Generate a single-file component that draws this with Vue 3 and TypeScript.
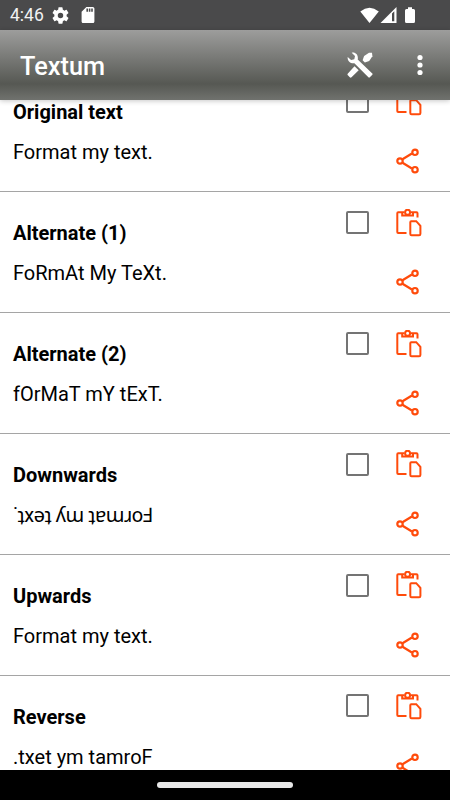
<script setup lang="ts">
interface Style {
  name: string
  text: string
  flipped?: boolean
}

const styles: Style[] = [
  { name: 'Original text', text: 'Format my text.' },
  { name: 'Alternate (1)', text: 'FoRmAt My TeXt.' },
  { name: 'Alternate (2)', text: 'fOrMaT mY tExT.' },
  { name: 'Downwards', text: '˙ʇxǝʇ ʎɯ ʇɐɯɹoℲ', flipped: true },
  { name: 'Upwards', text: 'Format my text.' },
  { name: 'Reverse', text: '.txet ym tamroF' },
]
</script>

<template>
  <div class="screen">
    <div class="status">
      <span class="clock">4:46</span>
      <svg class="gear" viewBox="2 2 20 20"><path d="M19.14 12.94c.04-.3.06-.61.06-.94 0-.32-.02-.64-.07-.94l2.03-1.58a.49.49 0 0 0 .12-.61l-1.92-3.32a.49.49 0 0 0-.59-.22l-2.39.96c-.5-.38-1.03-.7-1.62-.94l-.36-2.54a.48.48 0 0 0-.48-.41h-3.84c-.24 0-.43.17-.47.41l-.36 2.54c-.59.24-1.13.57-1.62.94l-2.39-.96a.48.48 0 0 0-.59.22L2.74 8.87c-.12.21-.08.47.12.61l2.03 1.58c-.05.3-.09.63-.09.94s.02.64.07.94l-2.03 1.58a.49.49 0 0 0-.12.61l1.92 3.32c.12.22.37.29.59.22l2.39-.96c.5.38 1.03.7 1.62.94l.36 2.54c.05.24.24.41.48.41h3.84c.24 0 .44-.17.47-.41l.36-2.54c.59-.24 1.13-.56 1.62-.94l2.39.96c.22.08.47 0 .59-.22l1.92-3.32a.49.49 0 0 0-.12-.61zM12 15.200A3.200 3.200 0 1 1 12 8.800a3.200 3.200 0 0 1 0 6.400z" /></svg>
      <svg class="sd" viewBox="4 2 16 20"><path d="M18 2h-8L4 8v12c0 1.100.9 2 2 2h12c1.100 0 2-.9 2-2V4c0-1.100-.9-2-2-2zm-6 6h-2V4h2zm3 0h-2V4h2zm3 0h-2V4h2z" /></svg>
      <svg class="signals" viewBox="0 0 56 18">
        <path d="M.3 4.500Q9.500-2.800 18.800 4.500L9.500 16z" />
        <path fill-rule="evenodd" d="M20.500 16L36.500 0V16zM32 6.500V14.200H34.300V4.200z" />
        <path d="M46.500 2H48V.3H52V2H53.500Q55 2 55 3.500V14.500Q55 16 53.500 16H46.500Q45 16 45 14.500V3.500Q45 2 46.500 2z" />
      </svg>
    </div>

    <header class="bar">
      <h1>Textum</h1>
      <svg class="tools" viewBox="0 0 26 26">
        <path d="M4.700.7C8.500-.3 11.700 3.200 10.700 7.500L25.300 21.400a1 1 0 0 1 0 1.400L22.800 25.300a1 1 0 0 1-1.400 0L7.400 11.200C3.700 12 .1 8.900.7 4.900L4.100 8 7.300 7.200 8 4z" />
        <path d="M15.600 8.300L17.100 3.900 22 .7 25 .8 25.400 4.300 22.200 9 17.800 10.500z" />
        <path d="M7.500 14.300L11.700 18.200 4.500 25.200a1.200 1.200 0 0 1-1.700 0L.9 23.300a1.200 1.200 0 0 1 0-1.700z" />
      </svg>
      <svg class="more" viewBox="0 0 6 20"><circle cx="3" cy="2.500" r="2.600" /><circle cx="3" cy="10" r="2.600" /><circle cx="3" cy="17.500" r="2.600" /></svg>
    </header>

    <main class="list">
      <section v-for="item in styles" :key="item.name" class="row">
        <div class="copy">
          <h2>{{ item.name }}</h2>
          <p :class="{ flipped: item.flipped }">{{ item.text }}</p>
        </div>
        <span class="check" role="checkbox" aria-checked="false"></span>
        <div class="actions">
          <svg class="paste" viewBox="0 0 26 28">
            <path d="M10.500 24H2.200Q1.300 24 1.300 23.100V4.200Q1.300 3.300 2.200 3.300H8.500M15 3.300H20.500Q21.500 3.300 21.500 4.300V8.500" />
            <path d="M6.200 3.500V6.500H17V3.500" />
            <circle cx="11.600" cy="3.200" r="2.500" />
            <path d="M15.200 12.200H20.200L24.400 16.800V25Q24.400 26.300 23.100 26.300H15.600Q14.300 26.300 14.300 25V13.300Q14.300 12.200 15.200 12.200z" />
          </svg>
          <svg class="share" viewBox="0 0 24 26">
            <path d="M6.500 11.300L15.900 5.500M6.500 14.700L15.900 20.500" />
            <circle cx="4" cy="13" r="2.700" /><circle cx="19" cy="4.300" r="2.700" /><circle cx="19" cy="21.700" r="2.700" />
          </svg>
        </div>
      </section>
    </main>

    <footer class="nav"><span></span></footer>
  </div>
</template>

<style>
body {
  margin: 0;
}
</style>

<style scoped>
.screen {
  display: flex;
  flex-direction: column;
  width: 450px;
  height: 800px;
  overflow: hidden;
  background: #fff;
  color: #000;
  font-family: Roboto, "Noto Sans", sans-serif;
}
.status {
  display: flex;
  flex: none;
  align-items: center;
  box-sizing: border-box;
  height: 30px;
  padding: 0 34px 0 10px;
  background: #4a4a4b;
  color: #f2f2f2;
}
.status svg {
  fill: #fff;
}
.clock {
  width: 42px;
  font-size: 17.500px;
  line-height: 32px;
}
.gear {
  width: 17px;
  height: 17px;
}
.sd {
  width: 14px;
  height: 16px;
  margin-left: 12px;
}
.signals {
  width: 56px;
  height: 18px;
  margin: 2px 0 0 auto;
}
.bar {
  display: flex;
  flex: none;
  align-items: center;
  box-sizing: border-box;
  height: 70px;
  padding: 0 27px 0 20px;
  background: linear-gradient(#9d9d9c 0%, #565853 77%, #70726e 100%);
  color: #fff;
  position: relative;
  box-shadow: 0 1px 5px rgba(0, 0, 0, 0.22);
}
.bar h1 {
  flex: 1;
  margin: 2px 0 0;
  font-size: 25.300px;
  font-weight: 500;
}
.bar svg {
  fill: #fff;
}
.tools {
  width: 26px;
  height: 26px;
}
.more {
  width: 6px;
  height: 20px;
  margin-left: 44px;
  overflow: visible;
}
.list {
  flex: 1;
  min-height: 0;
  overflow: hidden;
}
.row {
  display: flex;
  align-items: flex-start;
  box-sizing: border-box;
  height: 120.850px;
  padding: 0 29px 0 13px;
  border-bottom: 1px solid #a5a5a5;
}
.row:first-child {
  margin-top: -28.550px;
}
.copy {
  flex: 1;
  padding-top: 29px;
}
h2,
p {
  margin: 0;
  font-size: 20px;
  line-height: 24px;
  white-space: nowrap;
}
h2 {
  font-weight: 700;
}
p {
  margin-top: 16px;
  font-weight: 400;
}
.flipped {
  letter-spacing: -0.460px;
}
.check {
  box-sizing: border-box;
  width: 23px;
  height: 23px;
  margin: 18.700px 27px 0 0;
  border: 2px solid #747474;
  border-radius: 2px;
}
.actions {
  display: flex;
  flex-direction: column;
  width: 25px;
  padding-top: 16.500px;
}
.actions svg {
  fill: none;
  stroke: #ff4b0b;
  stroke-width: 2.200;
}
.actions .paste {
  width: 26px;
  height: 28px;
  stroke-width: 2;
}
.share {
  width: 24px;
  height: 26px;
  margin-top: 32.400px;
}
.nav {
  display: flex;
  flex: none;
  align-items: center;
  justify-content: center;
  height: 30px;
  background: #000;
}
.nav span {
  width: 136px;
  height: 6px;
  border-radius: 3px;
  background: #e8e8e8;
}
</style>
